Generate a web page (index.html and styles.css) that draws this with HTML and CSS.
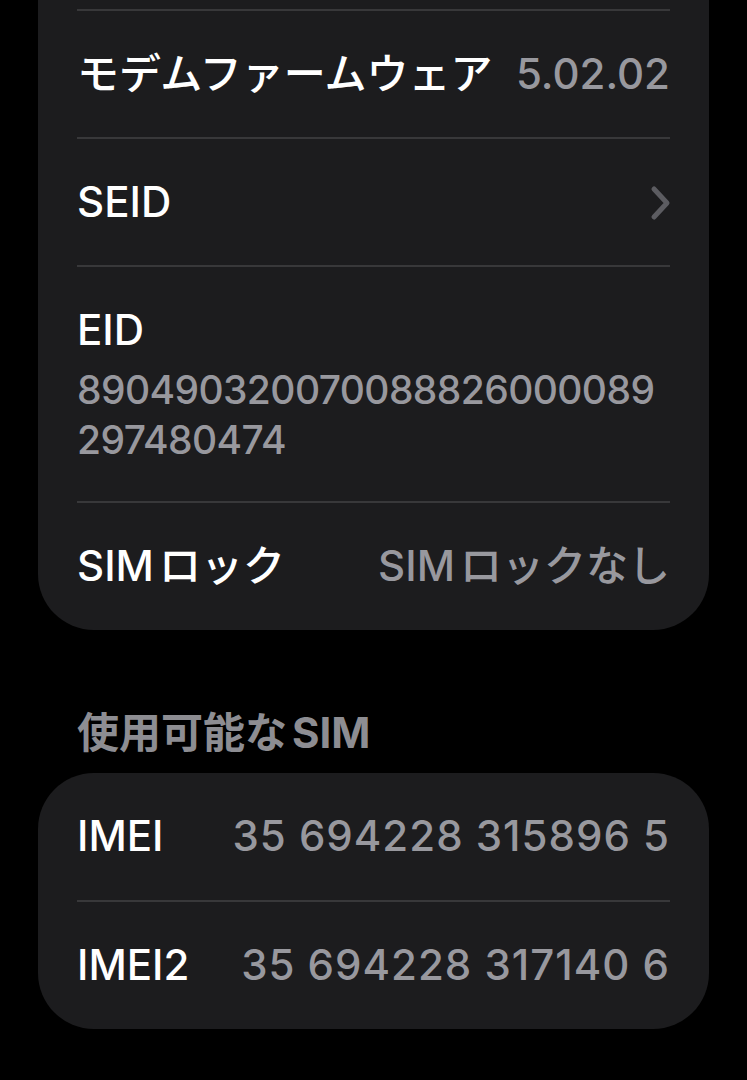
FILE: index.html
```html
<!DOCTYPE html>
<html lang="ja">
<head>
<meta charset="utf-8">
<title>情報</title>
<link rel="stylesheet" href="styles.css">
</head>
<body>
<main class="page">
  <section class="card card-top">
    <div class="stub"></div>
    <div class="row">
      <span class="label">モデムファームウェア</span>
      <span class="value">5.02.02</span>
    </div>
    <div class="row">
      <span class="label">SEID</span>
      <svg class="chevron" width="22" height="38" viewBox="0 0 22 38" aria-hidden="true">
        <polyline points="4,5 17,19 4,33" fill="none" stroke="#5c5c61" stroke-width="5" stroke-linecap="round" stroke-linejoin="round"/>
      </svg>
    </div>
    <div class="row row-stack">
      <span class="label">EID</span>
      <span class="value value-block">890490320070088826000089<br>297480474</span>
    </div>
    <div class="row row-last">
      <span class="label">SIM<span class="gap"></span>ロック</span>
      <span class="value">SIM<span class="gap"></span>ロックなし</span>
    </div>
  </section>

  <h2 class="section-title">使用可能な<span class="gap"></span>SIM</h2>

  <section class="card card-full">
    <div class="row">
      <span class="label">IMEI</span>
      <span class="value value-num">35 694228 315896 5</span>
    </div>
    <div class="row row-last">
      <span class="label">IMEI2</span>
      <span class="value value-num">35 694228 317140 6</span>
    </div>
  </section>
</main>
</body>
</html>
```

FILE: styles.css
```css
html, body {
  margin: 0;
  padding: 0;
  background: #000;
}

body {
  font-family: "Inter", "Noto Sans CJK JP", sans-serif;
  font-size: 42px;
  font-weight: 500;
  color: #fff;
  -webkit-font-smoothing: antialiased;
}

.page {
  padding: 0 38px;
  display: flex;
  flex-direction: column;
}

.card {
  background: #1c1c1e;
  padding: 0 39px 0 39px;
  display: flex;
  flex-direction: column;
}

.card-top {
  border-radius: 0 0 56px 56px;
}

.card-full {
  border-radius: 56px;
}

.stub {
  height: 9px;
}

.row {
  display: flex;
  align-items: center;
  justify-content: space-between;
  padding: 38px 0;
  line-height: 50px;
  border-top: 2px solid #38383a;
}

.row-last {
  padding-bottom: 39px;
}

.card-full .row:first-child {
  border-top: none;
  padding-top: 38px;
  padding-bottom: 39px;
}

.row-stack {
  flex-direction: column;
  align-items: flex-start;
  justify-content: flex-start;
  gap: 10px;
  padding: 38px 0 36px 0;
}

.label {
  white-space: nowrap;
}

.value {
  color: #98989e;
  white-space: nowrap;
}

.value-block {
  white-space: normal;
  font-size: 39px;
  letter-spacing: -0.6px;
}

.value-num {
  letter-spacing: 1px;
}

.gap {
  display: inline-block;
  width: 5px;
}

.chevron {
  display: block;
  margin-right: -2px;
  margin-top: 2px;
}

.section-title {
  margin: 80px 0 17px 0;
  padding-left: 39px;
  font-size: 42px;
  line-height: 46px;
  font-weight: 700;
  color: #8d8d92;
}
```
